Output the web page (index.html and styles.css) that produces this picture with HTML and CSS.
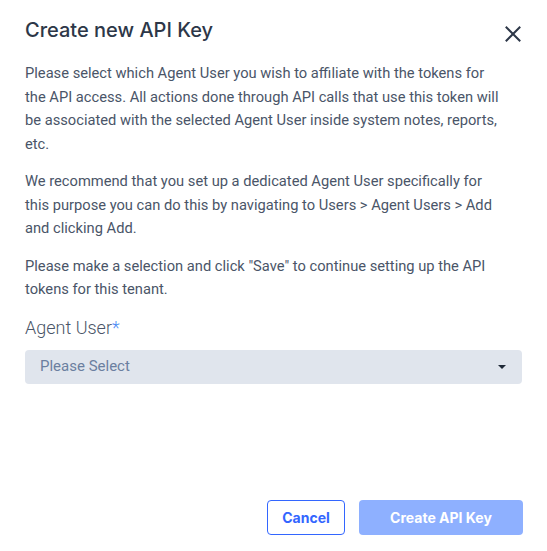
FILE: index.html
```html
<!DOCTYPE html>
<html lang="en">
<head>
<meta charset="utf-8">
<title>Create new API Key</title>
<link rel="stylesheet" href="styles.css">
</head>
<body>
<div class="dialog">
  <div class="header">
    <h1 class="title">Create new API Key</h1>
    <button class="close" type="button" aria-label="Close">
      <svg width="16" height="16" viewBox="0 0 16 16"><path d="M1.5 1.5 L14.5 14.5 M14.5 1.5 L1.5 14.5" stroke="#2d3748" stroke-width="2" fill="none" stroke-linecap="square"/></svg>
    </button>
  </div>
  <div class="body">
    <p>Please select which Agent User you wish to affiliate with the tokens for the API access. All actions done through API calls that use this token will be associated with the selected Agent User inside system notes, reports, etc.</p>
    <p>We recommend that you set up a dedicated Agent User specifically for this purpose you can do this by navigating to Users &gt; Agent Users &gt; Add and clicking Add.</p>
    <p>Please make a selection and click "Save" to continue setting up the API tokens for this tenant.</p>
    <label class="label">Agent User<span class="req">*</span></label>
    <div class="select">
      <span class="placeholder">Please Select</span>
      <span class="caret"></span>
    </div>
  </div>
  <div class="footer">
    <button class="btn btn-outline" type="button">Cancel</button>
    <button class="btn btn-primary" type="button">Create API Key</button>
  </div>
</div>
</body>
</html>
```
FILE: styles.css
```css
html, body {
  margin: 0;
  padding: 0;
  background: #ffffff;
}
.dialog {
  box-sizing: border-box;
  height: 551px;
  padding: 16px 24px 16px 25px;
  display: flex;
  flex-direction: column;
  font-family: Roboto, "Liberation Sans", sans-serif;
}
.header {
  display: flex;
  justify-content: space-between;
  align-items: flex-start;
}
.title {
  margin: 0;
  font-family: Inter, "Liberation Sans", sans-serif;
  font-size: 20px;
  font-weight: 500;
  line-height: 28px;
  color: #2d3748;
}
.close {
  margin: 10px 2px 0 0;
  padding: 0;
  border: 0;
  background: none;
  width: 16px;
  height: 16px;
  display: flex;
}
.body {
  margin-top: 18px;
  font-size: 14.7px;
  line-height: 23.5px;
  color: #4a5568;
}
.body p {
  margin: 0 0 14px;
  max-width: 478px;
}
.label {
  display: block;
  margin-top: 0;
  font-size: 18px;
  font-weight: 300;
  line-height: 24px;
  color: #4a5568;
}
.req {
  color: #4d8cf5;
}
.select {
  margin-top: 10px;
  margin-right: 1px;
  height: 34px;
  box-sizing: border-box;
  padding: 0 16px 0 15px;
  background: #e0e5ed;
  border-radius: 4px;
  display: flex;
  align-items: center;
  justify-content: space-between;
}
.placeholder {
  font-size: 15px;
  color: #6b7fa0;
}
.caret {
  width: 0;
  height: 0;
  border-left: 4px solid transparent;
  border-right: 4px solid transparent;
  border-top: 4px solid #1f2937;
}
.footer {
  margin-top: auto;
  display: flex;
  justify-content: flex-end;
  gap: 14px;
}
.btn {
  height: 35px;
  box-sizing: border-box;
  border-radius: 4px;
  font-family: Inter, "Liberation Sans", sans-serif;
  font-size: 14px;
  font-weight: 700;
  cursor: pointer;
}
.btn-outline {
  width: 78px;
  background: #ffffff;
  border: 1.5px solid #3366ff;
  color: #3366ff;
}
.btn-primary {
  width: 164px;
  background: #8eb0ff;
  border: 0;
  color: #ffffff;
}
```
